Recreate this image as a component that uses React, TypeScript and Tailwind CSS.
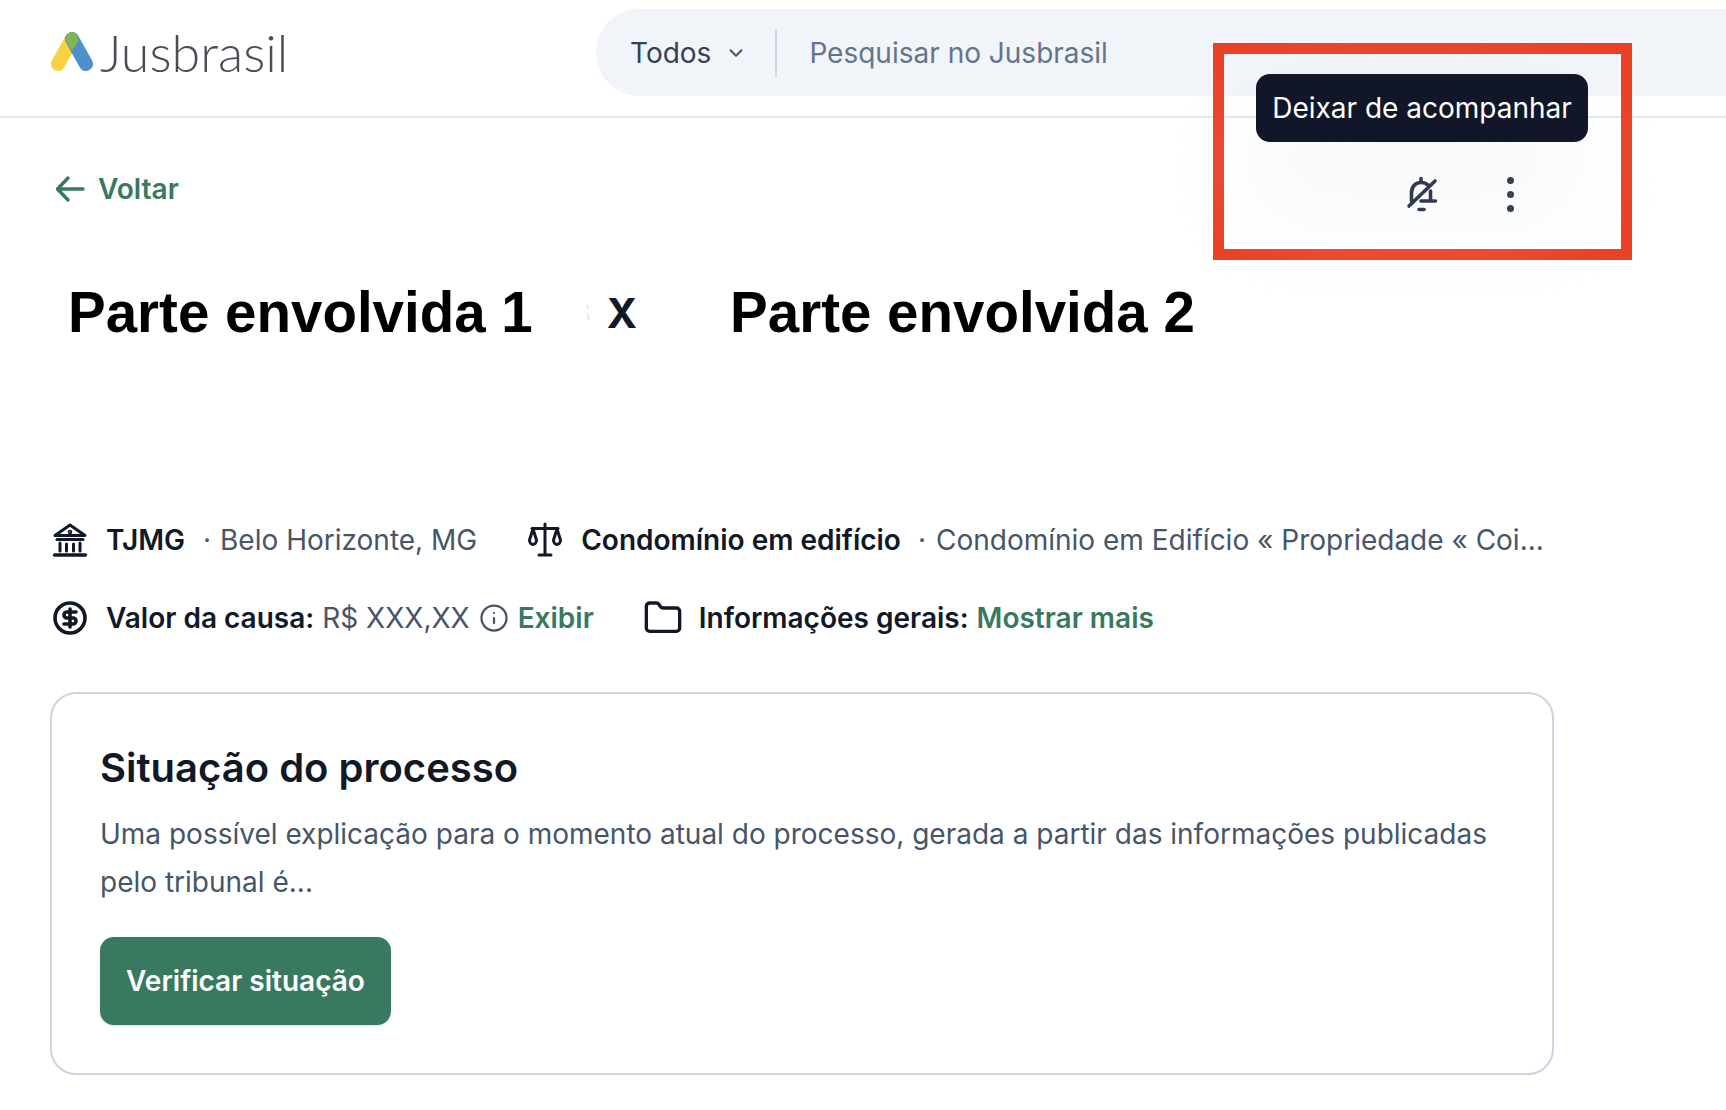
import React from "react";
import { ChevronDown, CircleDollarSign, Folder, Info } from "lucide-react";

function Logo() {
  return (
    <svg width="44" height="40" viewBox="0 0 44 40" className="shrink-0">
      <line x1="8" y1="32" x2="22" y2="7" stroke="#f9d142" strokeWidth="14" strokeLinecap="round" />
      <line x1="36" y1="32" x2="22" y2="7" stroke="#4f8fcb" strokeWidth="14" strokeLinecap="round" />
      <path d="M15.5 9 C15.5 3 19 0 22 0 C25 0 28.5 3 28.5 9 L22 19 Z" fill="#84b455" />
    </svg>
  );
}

function BackArrow() {
  return (
    <svg width="30" height="28" viewBox="0 0 30 28" fill="none" stroke="#38795f" strokeWidth="3.4" strokeLinecap="round" strokeLinejoin="round" className="shrink-0">
      <path d="M2.5 14 H28 M13 3 L2.5 14 L13 25" />
    </svg>
  );
}

function BankIcon() {
  return (
    <svg width="36" height="36" viewBox="0 0 36 36" fill="none" stroke="#111827" strokeWidth="3" strokeLinecap="round" strokeLinejoin="round" className="shrink-0">
      <path d="M3 13.5 L18 3 L33 13.5 Z" />
      <path d="M5 17.5 H31" />
      <path d="M8 21 V29 M14.5 22 V29 M21.5 22 V29 M28 21 V29" />
      <path d="M2.5 33 H33.5" strokeWidth="3.4" />
      <circle cx="18" cy="10" r="0.8" fill="#111827" />
    </svg>
  );
}

function ScaleIcon() {
  return (
    <svg width="36" height="36" viewBox="0 0 36 36" fill="none" stroke="#111827" strokeWidth="3" strokeLinecap="round" strokeLinejoin="round" className="shrink-0">
      <path d="M18 2 V32 M12 33 H24" />
      <path d="M5 6.5 H31" />
      <path d="M6 7 L2.5 18 C2.5 24 9.5 24 9.5 18 Z" />
      <path d="M30 7 L26.5 18 C26.5 24 33.5 24 33.5 18 Z" />
    </svg>
  );
}

function BellSlash() {
  return (
    <svg width="32" height="36" viewBox="0 0 32 36" fill="none" stroke="#2f3b52" strokeWidth="3.6" strokeLinecap="round" strokeLinejoin="round">
      <path d="M3 30 L29 5" />
      <path d="M5.5 25 V17 C5.5 10 10 6.5 15 6.5 C18 6.5 20.5 7.5 22 9" />
      <path d="M15 2.5 V5" />
      <path d="M24.5 15 V25 H15 M24.5 25 H29.5" />
      <path d="M13 33.5 H18" />
    </svg>
  );
}

export default function App() {
  return (
    <div className="relative h-[1110px] w-full overflow-hidden bg-white font-['Inter',sans-serif] text-[#111827]">
      <header className="flex h-[118px] items-start border-b-2 border-[#e2e8f0]">
        <div className="ml-[50px] mt-[31px] flex w-[546px] items-center gap-[6px]">
          <Logo />
          <span className="font-['Lato',sans-serif] text-[52px] font-light leading-[42px] text-[#4c4c54]">Jusbrasil</span>
        </div>
        <div className="mt-[9px] flex h-[87px] flex-1 items-center rounded-l-[44px] bg-[#f1f5f9] pl-[34px] text-[28px]">
          <span className="text-[#334155]">Todos</span>
          <ChevronDown className="ml-[14px] h-[22px] w-[22px] text-[#475569]" strokeWidth={2.2} />
          <div className="ml-[28px] h-[48px] w-[2px] bg-[#cbd5e1]" />
          <span className="ml-[32px] text-[#64748b]">Pesquisar no Jusbrasil</span>
        </div>
      </header>

      <main className="px-[50px]">
        <a className="mt-[53px] flex items-center gap-[13px] pl-[5px] text-[28px] font-semibold leading-[36px] text-[#38795f]">
          <BackArrow />
          Voltar
        </a>

        <h1 className="mt-[74px] flex h-[64px] items-center pl-[18px] font-['Liberation_Sans',sans-serif] text-[56.5px] font-bold leading-[64px] text-black">
          <span>Parte envolvida 1</span>
          <svg width="6" height="20" viewBox="0 0 6 20" className="ml-[52px] mr-[16px]">
            <path d="M2 2 L3 6 M2 10 L4 17" stroke="#d1d5db" strokeWidth="1" />
          </svg>
          <span className="font-['Inter',sans-serif] text-[41px] text-[#111827]">X</span>
          <span className="ml-[93px]">Parte envolvida 2</span>
        </h1>

        <div className="mt-[175px] flex h-[40px] items-center pl-[2px] text-[28px] whitespace-nowrap">
          <BankIcon />
          <span className="ml-[18px] font-semibold">TJMG</span>
          <span className="ml-[18px] text-[#475569]">·</span>
          <span className="ml-[9px] text-[#475569]">Belo Horizonte, MG</span>
          <span className="ml-[50px] flex items-center"><ScaleIcon /></span>
          <span className="ml-[18px] font-semibold">Condomínio em edifício</span>
          <span className="ml-[17px] text-[#475569]">·</span>
          <span className="ml-[10px] text-[#475569]">Condomínio em Edifício « Propriedade « Coi...</span>
        </div>

        <div className="mt-[38px] flex h-[40px] items-center pl-[2px] text-[28px] whitespace-nowrap">
          <CircleDollarSign className="h-[36px] w-[36px] shrink-0" strokeWidth={2.4} />
          <span className="ml-[18px] font-semibold">Valor da causa:</span>
          <span className="ml-[8px] text-[#475569]">R$ XXX,XX</span>
          <Info className="ml-[9px] h-[30px] w-[30px] text-[#475569]" strokeWidth={1.8} />
          <span className="ml-[9px] font-semibold text-[#38795f]">Exibir</span>
          <Folder className="ml-[49px] h-[40px] w-[40px] shrink-0" strokeWidth={2} />
          <span className="ml-[16px] font-semibold">Informações gerais:</span>
          <span className="ml-[8px] font-semibold text-[#38795f]">Mostrar mais</span>
        </div>

        <section className="mt-[54px] h-[383px] w-[1504px] rounded-[26px] border-2 border-[#cbd5e1] px-[48px] pt-[50px]">
          <h2 className="text-[40px] font-semibold leading-[48px]">Situação do processo</h2>
          <p className="mt-[18px] text-[28px] leading-[48px] text-[#475569]">
            Uma possível explicação para o momento atual do processo, gerada a partir das informações publicadas pelo tribunal é...
          </p>
          <button className="mt-[31px] flex h-[88px] w-[291px] items-center justify-center rounded-[14px] bg-[#38795f] text-[28px] font-semibold text-white shadow-sm">
            Verificar situação
          </button>
        </section>
      </main>

      <div className="absolute left-[1213px] top-[43px] h-[217px] w-[419px] border-[11px] border-[#ea4025]">
        <div className="absolute left-[20px] top-[40px] h-[130px] w-[340px] rounded-full bg-[#e8ebf0] opacity-30 blur-2xl" />
        <div className="absolute left-[32px] top-[20px] flex h-[68px] w-[332px] items-center justify-center rounded-[14px] bg-[#111729] text-[28px] whitespace-nowrap text-white">
          Deixar de acompanhar
        </div>
        <div className="absolute left-[182px] top-[122px]"><BellSlash /></div>
        <div className="absolute left-[283px] top-[123px] flex flex-col gap-[7px]">
          <span className="h-[7px] w-[7px] rounded-full bg-[#334155]" />
          <span className="h-[7px] w-[7px] rounded-full bg-[#334155]" />
          <span className="h-[7px] w-[7px] rounded-full bg-[#334155]" />
        </div>
      </div>
    </div>
  );
}
